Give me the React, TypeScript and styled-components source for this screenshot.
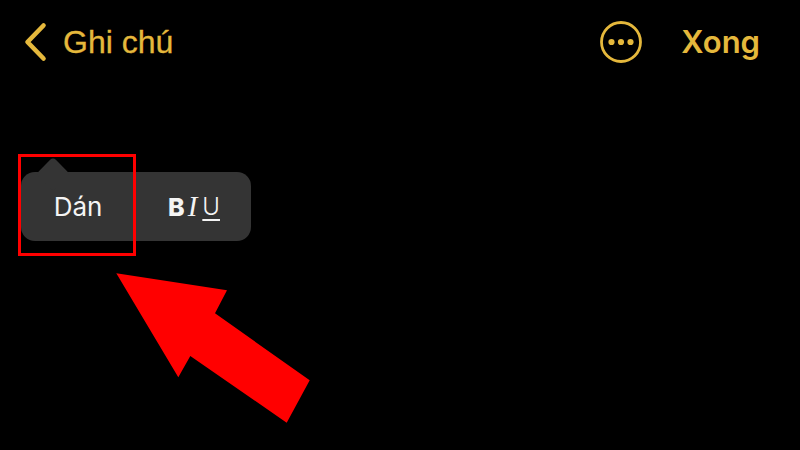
import React from 'react';
import styled, { createGlobalStyle } from 'styled-components';

const GOLD = '#e5b83c';

const App = () => {
    return (
        <Page>
            <GlobalStyle />
            <Header>
                <BackLink>
                    <svg width="24" height="40" viewBox="0 0 24 40" fill="none">
                        <path d="M20.5 3.5 L4.5 20 L20.5 36.5" stroke={GOLD} strokeWidth="4.6" strokeLinecap="round" strokeLinejoin="round" />
                    </svg>
                    <BackLabel>Ghi chú</BackLabel>
                </BackLink>
                <HeaderActions>
                    <svg width="44" height="44" viewBox="0 0 44 44" fill="none">
                        <circle cx="22" cy="22" r="19.5" stroke={GOLD} strokeWidth="2.8" />
                        <circle cx="12.5" cy="22" r="3.1" fill={GOLD} />
                        <circle cx="22" cy="22" r="3.1" fill={GOLD} />
                        <circle cx="31.5" cy="22" r="3.1" fill={GOLD} />
                    </svg>
                    <DoneLabel>Xong</DoneLabel>
                </HeaderActions>
            </Header>
            <EditMenu>
                <MenuItem $width={114}>Dán</MenuItem>
                <MenuItem $width={116}>
                    <BoldMark>B</BoldMark>
                    <ItalicMark>I</ItalicMark>
                    <UnderlineMark>U</UnderlineMark>
                </MenuItem>
            </EditMenu>
            <Highlight />
            <PointerArrow width="800" height="450" viewBox="0 0 800 450">
                <polygon points="116.3,273.3 227,290.3 215,313.3 309.7,380.3 286.7,422.7 190.3,356 178.3,377.3" fill="#ff0000" />
            </PointerArrow>
        </Page>
    );
};

const GlobalStyle = createGlobalStyle`
    html, body {
        margin: 0;
        padding: 0;
        background: #000000;
    }
`

const Page = styled.div`
    position: relative;
    width: 800px;
    height: 450px;
    overflow: hidden;
    background: #000000;
    font-family: "Liberation Sans", Arial, sans-serif;
`

const Header = styled.header`
    display: flex;
    align-items: center;
    justify-content: space-between;
    height: 44px;
    padding: 20px 40px 0 23px;
`

const BackLink = styled.div`
    display: flex;
    align-items: center;
    gap: 16px;
`

const BackLabel = styled.span`
    font-size: 32px;
    color: ${GOLD};
    -webkit-text-stroke: 0.3px ${GOLD};
`

const HeaderActions = styled.div`
    display: flex;
    align-items: center;
    gap: 38px;
`

const DoneLabel = styled.span`
    font-family: Inter, "Liberation Sans", sans-serif;
    font-size: 31px;
    font-weight: 600;
    color: ${GOLD};
    margin-top: -2px;
`

const EditMenu = styled.div`
    position: relative;
    display: flex;
    width: 230px;
    height: 69px;
    margin: 108px 0 0 21px;
    border-radius: 14px;
    background: #343434;

    &::before {
        content: '';
        position: absolute;
        top: -10px;
        left: 20px;
        width: 24px;
        height: 24px;
        border-radius: 4px;
        background: #343434;
        transform: rotate(45deg);
    }
`

const MenuItem = styled.div<{$width: number}>`
    position: relative;
    display: flex;
    align-items: center;
    justify-content: center;
    width: ${({$width}) => $width}px;
    font-family: Inter, "Liberation Sans", sans-serif;
    font-size: 26px;
    color: #f4f4f4;
`

const BoldMark = styled.span`
    font-size: 25px;
    font-weight: 800;
    margin-right: 3px;
`

const ItalicMark = styled.span`
    font-family: "Liberation Serif", serif;
    font-size: 29px;
    font-style: italic;
    margin-right: 5px;
`

const UnderlineMark = styled.span`
    font-weight: 300;
    font-size: 24px;
    margin-right: -2px;
    text-decoration: underline;
    text-underline-offset: 4px;
    text-decoration-thickness: 2px;
`

const Highlight = styled.div`
    position: absolute;
    left: 18px;
    top: 154px;
    width: 112px;
    height: 96px;
    border: 3px solid #ff0000;
`

const PointerArrow = styled.svg`
    position: absolute;
    left: 0;
    top: 0;
`

export default App;
